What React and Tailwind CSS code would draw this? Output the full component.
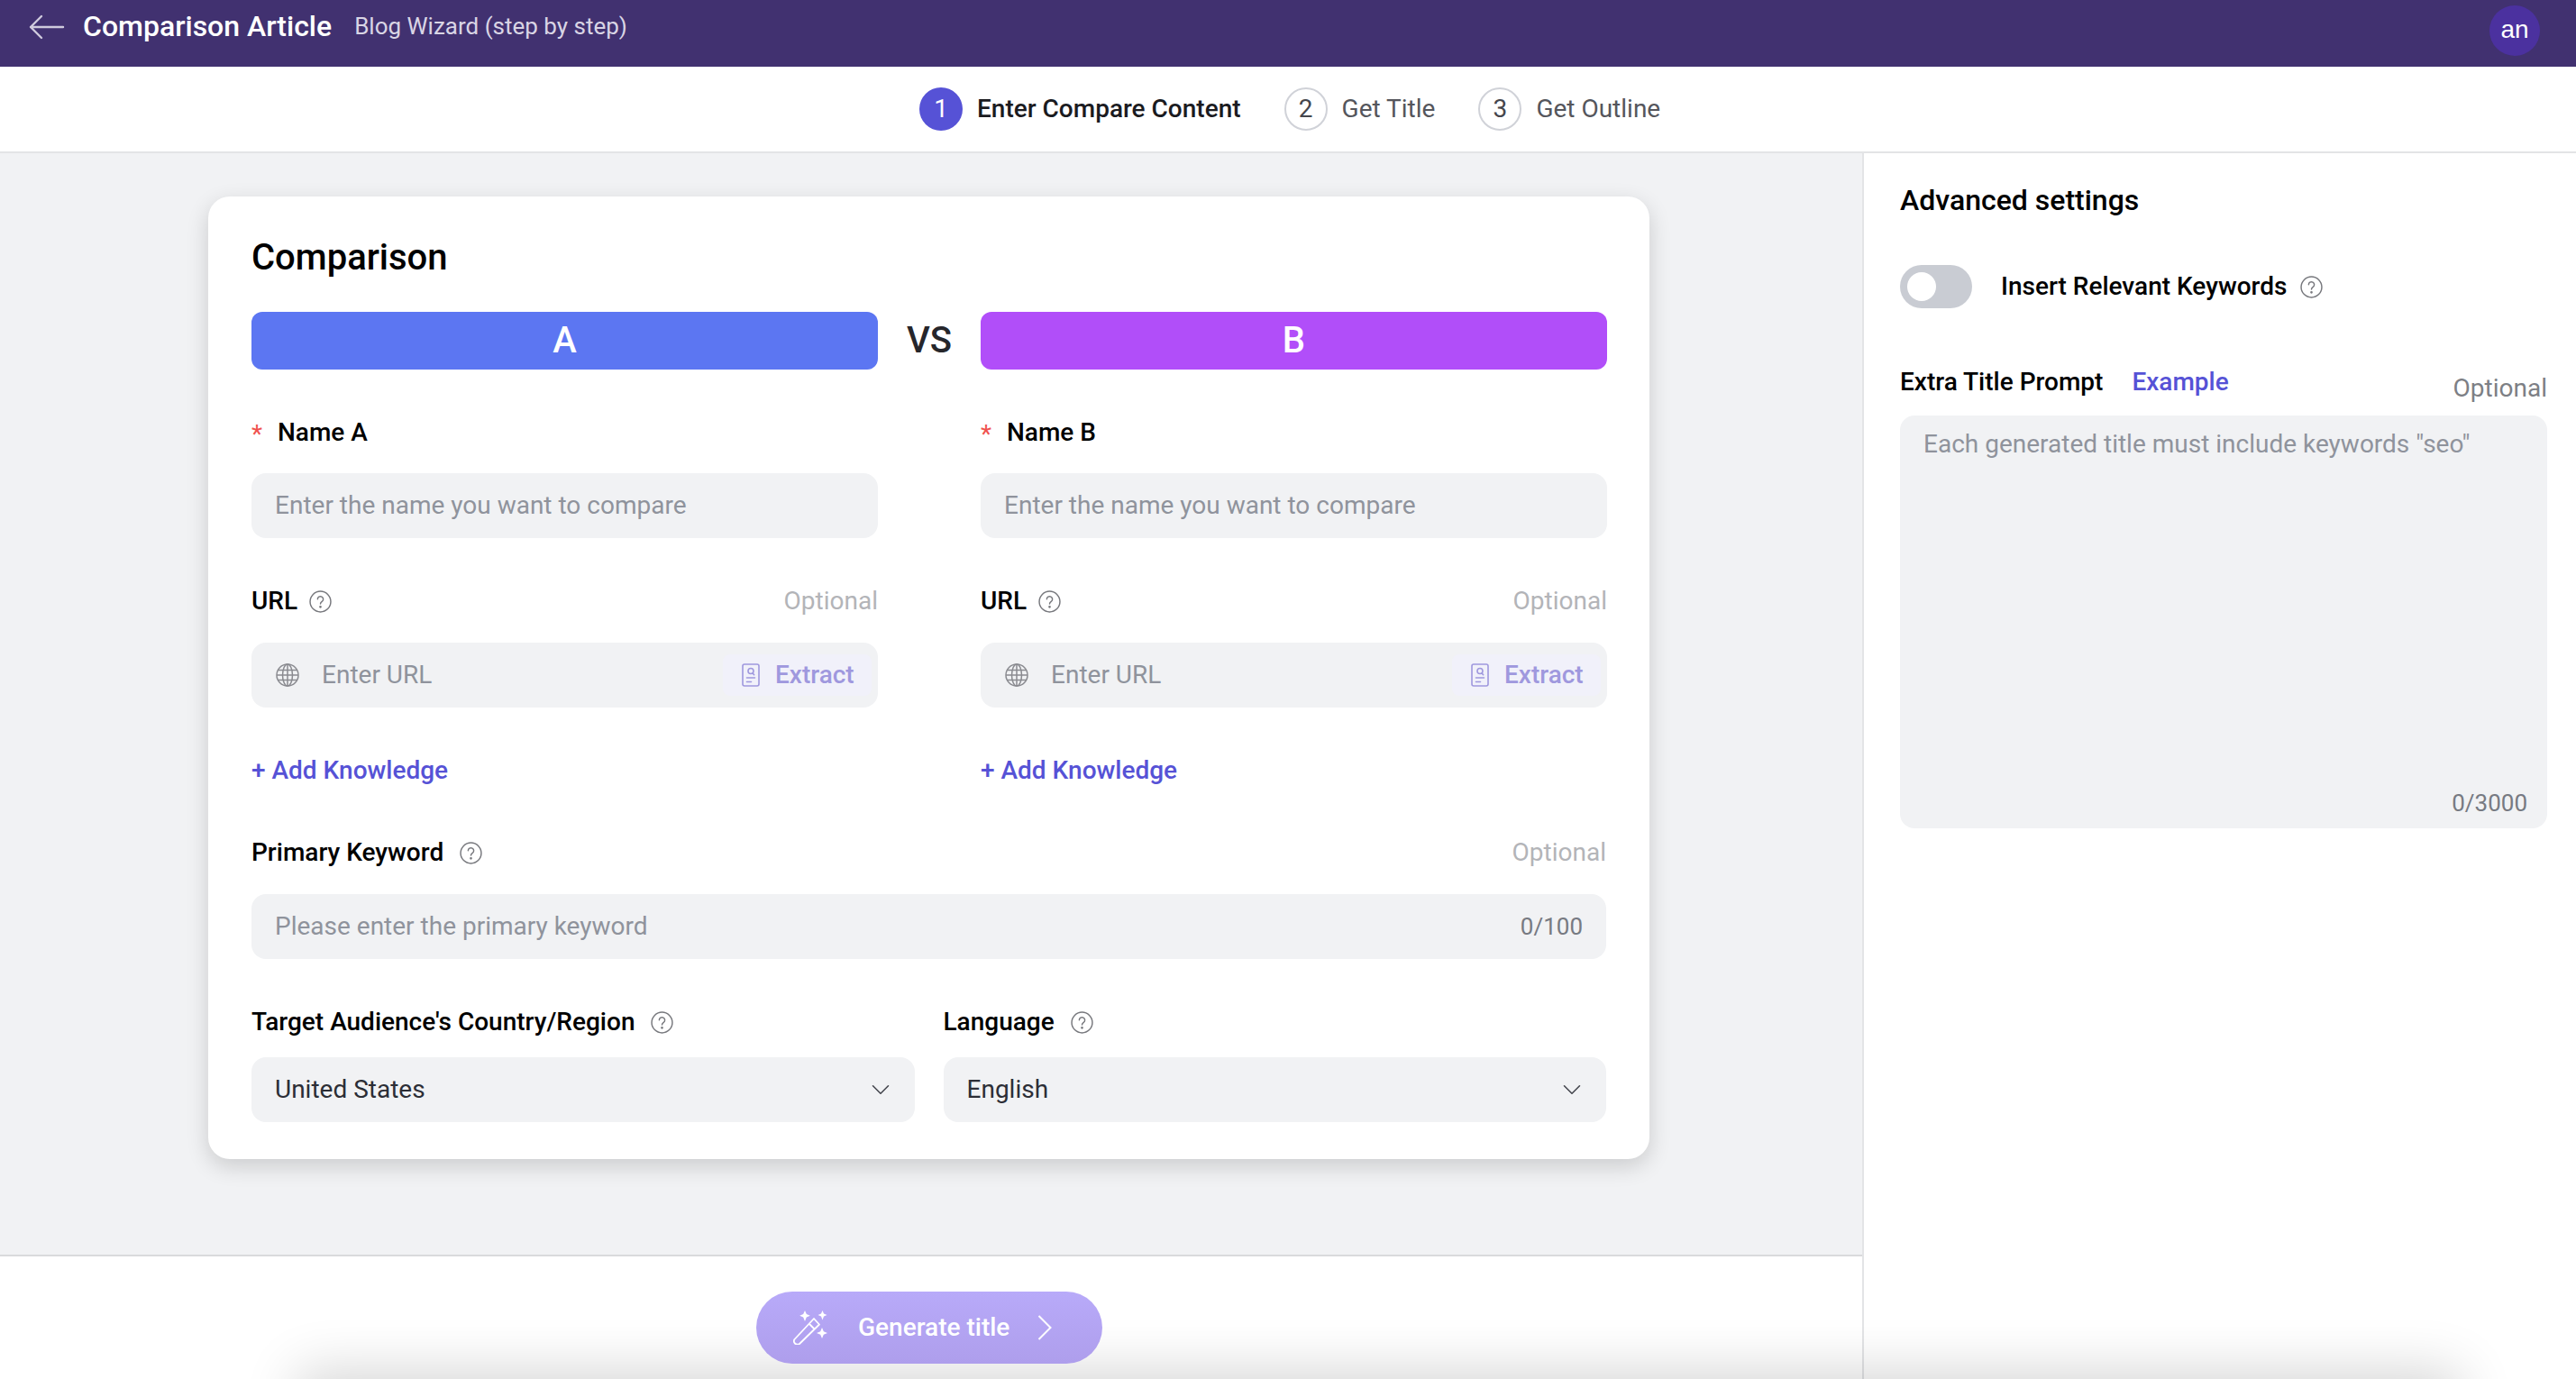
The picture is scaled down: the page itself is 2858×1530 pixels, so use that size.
import { ChevronDown } from "lucide-react";

const ACCENT = "text-[#5652d6]";

function Help({ className = "" }) {
  return (
    <svg viewBox="0 0 24 24" fill="none" stroke="#77787d" strokeWidth="1.4" strokeLinecap="round" className={`w-[25px] h-[25px] shrink-0 ${className}`}>
      <circle cx="12" cy="12" r="11" />
      <path d="M9 9.4a3 3 0 1 1 4.7 2.5c-1 .7-1.7 1.3-1.7 2.6" />
      <circle cx="12" cy="17.6" r=".6" fill="#77787d" />
    </svg>
  );
}

function Optional({ className = "text-[#b3b4b8]" }) {
  return <span className={`text-[28px] leading-none ${className}`}>Optional</span>;
}

function Step({ n, label, active }) {
  return (
    <div className="flex items-center gap-4">
      <div
        className={
          active
            ? "w-12 h-12 rounded-full bg-[#5652d6] text-white flex items-center justify-center text-[28px]"
            : "w-12 h-12 rounded-full border-2 border-[#d0d2d8] text-[#45464d] flex items-center justify-center text-[28px]"
        }
      >
        {n}
      </div>
      <span className={active ? "text-[28px] font-medium text-[#1b1b1f]" : "text-[28px] text-[#55565c]"}>{label}</span>
    </div>
  );
}

function GlobeIcon() {
  return (
    <svg viewBox="0 0 26 26" fill="none" stroke="#8a8b90" strokeWidth="1.5" className="w-[26px] h-[26px] shrink-0">
      <circle cx="13" cy="13" r="12" />
      <ellipse cx="13" cy="13" rx="5.5" ry="12" />
      <path d="M13 1v24M2.6 7.5h20.8M1 13h24M2.6 18.5h20.8" />
    </svg>
  );
}

function ExtractIcon() {
  return (
    <svg viewBox="0 0 20 26" fill="none" stroke="#9f98de" strokeWidth="1.6" strokeLinecap="round" className="w-5 h-[26px] shrink-0">
      <rect x="1" y="1" width="18" height="24" rx="2" />
      <circle cx="10" cy="8.5" r="3" />
      <path d="M12 11l1.6 1.6M5.5 16h9M5.5 20.5h5" />
    </svg>
  );
}

function CompareColumn({ name }) {
  return (
    <div className="flex flex-col">
      <div className="flex items-center h-8 mt-[54px]">
        <span className="text-[#f0524f] text-[28px] leading-none w-[29px] mt-1">*</span>
        <span className="text-[28px] font-medium text-black">Name {name}</span>
      </div>
      <div className="mt-[29px] h-[72px] rounded-2xl bg-[#f1f2f4] flex items-center px-[26px] text-[28px] text-[#8f939c]">
        Enter the name you want to compare
      </div>
      <div className="mt-[54px] h-8 flex items-center justify-between">
        <div className="flex items-center gap-[13px]">
          <span className="text-[28px] font-medium text-black">URL</span>
          <Help />
        </div>
        <Optional />
      </div>
      <div className="mt-[30px] h-[72px] rounded-2xl bg-[#f1f2f4] flex items-center pl-[27px] pr-[7px] text-[28px] text-[#8f939c]">
        <GlobeIcon />
        <span className="ml-[25px] flex-1">Enter URL</span>
        <div className="h-[46px] w-[165px] rounded-lg bg-[#f1f1fa] flex items-center pl-[21px] gap-[17px]">
          <ExtractIcon />
          <span className="font-medium text-[#9f98de]">Extract</span>
        </div>
      </div>
      <div className={`mt-[54px] h-8 flex items-center text-[28px] font-medium ${ACCENT}`}>+ Add Knowledge</div>
    </div>
  );
}

function SelectField({ label, value }) {
  return (
    <div className="flex flex-col">
      <div className="h-8 flex items-center gap-[18px]">
        <span className="text-[28px] font-medium text-black">{label}</span>
        <Help />
      </div>
      <div className="mt-[23px] h-[72px] rounded-2xl bg-[#f1f2f4] flex items-center justify-between pl-[26px] pr-[21px] text-[28px] text-[#2c2e36]">
        {value}
        <ChevronDown className="w-[34px] h-[34px] text-[#44464d]" strokeWidth={1.1} />
      </div>
    </div>
  );
}

export default function App() {
  return (
    <div className="relative h-screen w-full overflow-hidden flex flex-col bg-white font-['Roboto',sans-serif]">
      {/* Top bar */}
      <header className="h-[74px] shrink-0 bg-[#413170] flex items-center pl-8 pr-10">
        <svg viewBox="0 0 40 28" fill="none" stroke="#cfcadd" strokeWidth="2.4" strokeLinecap="round" strokeLinejoin="round" className="w-10 h-7 -mt-[14px]">
          <path d="M38 14H2M14 2L2 14l12 12" />
        </svg>
        <span className="ml-5 -mt-[16px] text-[32px] font-medium text-white">Comparison Article</span>
        <span className="ml-[25px] -mt-[16px] text-[26px] text-[#d9d5e5]">Blog Wizard (step by step)</span>
        <div className="ml-auto w-14 h-14 mt-[-6px] pb-[2px] rounded-full bg-[#4b319f] flex items-center justify-center text-[28px] text-white font-['Liberation_Sans',sans-serif]">
          an
        </div>
      </header>

      {/* Steps */}
      <div className="h-[96px] shrink-0 border-b-2 border-[#e3e4e6] flex items-center pl-[1020px] gap-[48px]">
        <Step n="1" label="Enter Compare Content" active />
        <Step n="2" label="Get Title" />
        <Step n="3" label="Get Outline" />
      </div>

      <div className="flex-1 flex min-h-0">
        {/* Left column */}
        <div className="w-[2066px] shrink-0 flex flex-col">
          <main className="h-[1224px] shrink-0 bg-[#f1f2f4] pt-[48px] pl-[231px] border-b-2 border-[#d9dadc]">
            <section className="w-[1599px] h-[1068px] bg-white rounded-3xl shadow-[0_8px_24px_rgba(0,0,0,0.16)] px-12 pt-[46px]">
              <h1 className="text-[40px] leading-[44px] font-medium text-black">Comparison</h1>

              <div className="mt-[38px] grid grid-cols-[695px_114px_695px] items-center">
                <div className="h-16 rounded-xl bg-[#5c76f2] flex items-center justify-center text-[40px] font-medium text-white">A</div>
                <div className="text-center text-[40px] font-medium text-[#26262b]">VS</div>
                <div className="h-16 rounded-xl bg-[#b14ef9] flex items-center justify-center text-[40px] font-medium text-white">B</div>
              </div>

              <div className="grid grid-cols-[695px_695px] gap-x-[114px]">
                <CompareColumn name="A" />
                <CompareColumn name="B" />
              </div>

              <div className="mt-[59px] h-8 flex items-center justify-between">
                <div className="flex items-center gap-[18px]">
                  <span className="text-[28px] font-medium text-black">Primary Keyword</span>
                  <Help />
                </div>
                <Optional />
              </div>
              <div className="mt-[30px] h-[72px] rounded-2xl bg-[#f1f2f4] flex items-center justify-between px-[26px] text-[28px] text-[#8f939c]">
                <span>Please enter the primary keyword</span>
                <span className="text-[26px] text-[#777a82]">0/100</span>
              </div>

              <div className="mt-[54px] grid grid-cols-2 gap-x-8">
                <SelectField label="Target Audience's Country/Region" value="United States" />
                <SelectField label="Language" value="English" />
              </div>
            </section>
          </main>

          {/* Footer action */}
          <div className="flex-1 flex items-start pt-[39px] pl-[839px]">
            <button className="relative z-10 w-[384px] h-20 rounded-full bg-gradient-to-b from-[#b8aaf9] to-[#ae9eec] flex items-center pl-[41px] text-white">
              <svg viewBox="0 0 40 38" fill="none" stroke="white" strokeWidth="1.8" strokeLinejoin="round" className="w-10 h-[38px] shrink-0">
                <path d="M23 9l6 6.5L7 37c-1.5 1-3.5 1-5-.5s-1.5-3-.5-4.5z" />
                <path d="M18 15l6 6" />
                <path d="M13 0l1.8 4 4 1.8-4 1.8L13 12l-1.8-4.4-4-1.8 4-1.8zM32.5 0l1.5 3.5 3.5 1.5L34 6.5 32.5 10.5 31 6.5 27.5 5 31 3.5zM32 19l1.8 4.2 4.2 1.8-4.2 1.8L32 31l-1.8-4.2L26 25l4.2-1.8z" fill="white" stroke="none" />
              </svg>
              <span className="ml-8 text-[28px] font-medium">Generate title</span>
              <svg viewBox="0 0 16 28" fill="none" stroke="white" strokeWidth="2" className="ml-[31px] w-4 h-7 shrink-0">
                <path d="M1.5 1l13 13-13 13" />
              </svg>
            </button>
          </div>
        </div>

        {/* Advanced settings */}
        <aside className="flex-1 border-l-2 border-[#e3e4e6] pl-10 pr-8 pt-[32px]">
          <h2 className="text-[32px] leading-10 font-medium text-black">Advanced settings</h2>
          <div className="mt-[52px] flex items-center">
            <div className="w-20 h-12 rounded-full bg-[#c9ccd3] flex items-center pl-2">
              <div className="w-8 h-8 rounded-full bg-white" />
            </div>
            <span className="ml-8 text-[28px] font-medium text-black">Insert Relevant Keywords</span>
            <Help className="ml-[15px]" />
          </div>
          <div className="mt-[61px] flex items-start">
            <span className="text-[28px] font-medium text-black">Extra Title Prompt</span>
            <span className={`ml-[32px] text-[28px] font-medium ${ACCENT}`}>Example</span>
            <span className="ml-auto mt-[14px]"><Optional className="text-[#7d7f85]" /></span>
          </div>
          <div className="relative mt-[14px] h-[458px] rounded-2xl bg-[#f1f2f4] px-[26px] pt-[11px] text-[28px] text-[#8f939c]">
            Each generated title must include keywords "seo"
            <span className="absolute right-[22px] bottom-2 text-[26px] text-[#777a82]">0/3000</span>
          </div>
        </aside>
      </div>

      {/* Soft shadow rising from below the window */}
      <div className="absolute left-[360px] w-[2340px] top-[1550px] h-10 shadow-[0_0_60px_30px_rgba(0,0,0,0.16)] pointer-events-none" />
    </div>
  );
}
